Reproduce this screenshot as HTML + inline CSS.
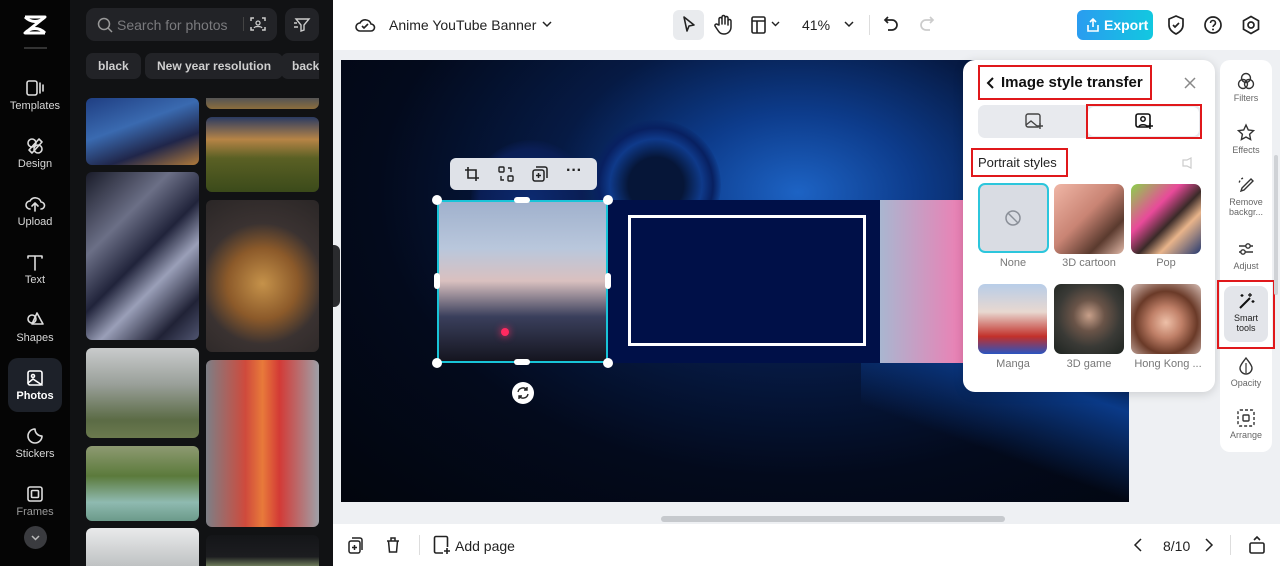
<!DOCTYPE html>
<html><head><meta charset="utf-8"><style>
*{box-sizing:border-box;margin:0;padding:0}
body{width:1280px;height:566px;overflow:hidden;font-family:"Liberation Sans",sans-serif;background:#eef0f3;position:relative}
.abs{position:absolute}
.nav{left:0;top:0;width:70px;height:566px;background:#050505}
.navi{position:absolute;left:8px;width:54px;height:54px;color:#d8d8d8;font-size:11px;text-align:center}
.navi svg{display:block;margin:6px auto 2px}
.panel{left:70px;top:0;width:263px;height:566px;background:#111214}
.ph{position:absolute;border-radius:6px}
.chip{position:absolute;top:53px;height:26px;background:#222327;border-radius:7px;color:#cfcfcf;font-size:12px;font-weight:bold;line-height:26px;padding:0 12px}
.top{left:333px;top:0;width:947px;height:50px;background:#fff}
.bot{left:333px;top:524px;width:947px;height:42px;background:#fff}
svg{overflow:visible}
.tb{fill:none;stroke:#222;stroke-width:1.6;stroke-linecap:round;stroke-linejoin:round}
.rt{position:absolute;left:1220px;top:60px;width:52px;height:392px;background:#fff;border-radius:10px}
.rti{position:absolute;left:0;width:52px;text-align:center;font-size:9px;color:#666}
.rti svg{display:block;margin:0 auto 3px}
.sp{left:963px;top:60px;width:252px;height:332px;background:#fff;border-radius:12px;box-shadow:0 2px 10px rgba(0,0,0,.15)}
.st{position:absolute;width:70px;height:70px;border-radius:7px}
.lbl{position:absolute;width:76px;text-align:center;font-size:11px;color:#777}
.red{position:absolute;border:2px solid #e0181b}
</style></head><body>

<div class="abs nav">
  <svg class="abs" style="left:22px;top:14px" width="26" height="22" viewBox="0 0 26 22"><path d="M3 3h20L3 19h20M3 3c6 6 14 6 20 0M3 19c6-6 14-6 20 0" fill="none" stroke="#fff" stroke-width="3" stroke-linejoin="round"/></svg>
  <div class="abs" style="left:24px;top:47px;width:23px;height:2px;background:#333"></div>
  <div class="navi" style="top:72px"><svg width="20" height="20" class="tb" style="stroke:#ddd"><rect x="2" y="3" width="10" height="14" rx="2"/><path d="M15 5v10M18 7v6"/></svg>Templates</div>
  <div class="navi" style="top:130px"><svg width="20" height="20" class="tb" style="stroke:#ddd"><circle cx="7" cy="7" r="4"/><circle cx="13" cy="13" r="4"/><path d="M14 3l3 3-10 11-3-3z"/></svg>Design</div>
  <div class="navi" style="top:188px"><svg width="20" height="20" class="tb" style="stroke:#ddd"><path d="M5 15a4 4 0 010-8 6 6 0 0111 1 3.5 3.5 0 010 7M10 17v-7M7 12l3-3 3 3"/></svg>Upload</div>
  <div class="navi" style="top:246px"><svg width="20" height="20" class="tb" style="stroke:#ddd"><path d="M3 4h14M10 4v14M3 4v2M17 4v2"/></svg>Text</div>
  <div class="navi" style="top:304px"><svg width="20" height="20" class="tb" style="stroke:#ddd"><circle cx="7" cy="9" r="4"/><path d="M12 3l6 11H7z"/></svg>Shapes</div>
  <div class="navi" style="top:358px;width:54px;height:54px;background:#1d2129;border-radius:10px;color:#fff;font-weight:bold;padding-top:4px"><svg width="20" height="20" class="tb" style="stroke:#fff"><rect x="3" y="3" width="14" height="14" rx="2"/><circle cx="8" cy="8" r="1.5"/><path d="M3 15l5-4 9 6"/></svg>Photos</div>
  <div class="navi" style="top:420px"><svg width="20" height="20" class="tb" style="stroke:#ddd"><path d="M10 3a7 7 0 107 7c-4 0-7-3-7-7z"/></svg>Stickers</div>
  <div class="navi" style="top:478px;color:#999"><svg width="20" height="20" class="tb" style="stroke:#ddd"><rect x="3" y="3" width="14" height="14" rx="2"/><rect x="6.5" y="6.5" width="7" height="7" rx="1"/></svg>Frames</div>
  <div class="abs" style="left:24px;top:526px;width:23px;height:23px;border-radius:50%;background:#3a3b3f"><svg width="23" height="23"><path d="M8 10l3.5 3.5L15 10" fill="none" stroke="#bbb" stroke-width="1.5"/></svg></div>
</div>

<div class="abs panel">
  <div class="abs" style="left:16px;top:8px;width:191px;height:33px;background:#222327;border-radius:9px"></div>
  <svg class="abs" style="left:27px;top:17px" width="16" height="16"><circle cx="7" cy="7" r="5.5" fill="none" stroke="#999" stroke-width="1.5"/><path d="M11 11l4 4" stroke="#999" stroke-width="1.5"/></svg>
  <div class="abs" style="left:47px;top:17px;color:#7b7b7e;font-size:14px">Search for photos</div>
  <div class="abs" style="left:173px;top:17px;width:1px;height:14px;background:#444"></div>
  <svg class="abs" style="left:180px;top:16px" width="16" height="16"><path d="M1 5V2h3M12 2h3v3M15 11v3h-3M4 14H1v-3" fill="none" stroke="#ccc" stroke-width="1.5"/><circle cx="8" cy="7" r="2" fill="none" stroke="#ccc" stroke-width="1.3"/><path d="M4 12c1-2 7-2 8 0" fill="none" stroke="#ccc" stroke-width="1.3"/></svg>
  <div class="abs" style="left:215px;top:8px;width:34px;height:33px;background:#222327;border-radius:9px"><svg width="34" height="33"><path d="M11 11h13l-5 6v5l-3 1v-6z M9 15h3M9 19h4" fill="none" stroke="#ccc" stroke-width="1.4"/></svg></div>
  <div class="chip" style="left:16px">black</div>
  <div class="chip" style="left:75px">New year resolution</div>
  <div class="chip" style="left:211px;width:38px;border-radius:7px 0 0 7px;overflow:hidden;padding:0 0 0 11px">back</div>
  <div class="ph" style="left:16px;top:98px;width:113px;height:67px;background:linear-gradient(160deg,#1f3e82,#3a6ab0 40%,#20264a 70%,#b07a3a)"></div>
  <div class="ph" style="left:136px;top:98px;width:113px;height:11px;background:linear-gradient(#555,#8b6d3c);border-radius:0 0 6px 6px"></div>
  <div class="ph" style="left:136px;top:117px;width:113px;height:75px;background:linear-gradient(#2b3b62 0,#b68446 30%,#5a6024 55%,#3b4a1a 100%)"></div>
  <div class="ph" style="left:16px;top:172px;width:113px;height:168px;background:linear-gradient(135deg,#1a1c2a,#6b6f86 30%,#20233a 50%,#9a9fb8 65%,#202236 85%,#505570)"></div>
  <div class="ph" style="left:136px;top:200px;width:113px;height:152px;background:radial-gradient(circle at 50% 55%,#c5924a 0,#8c5a2a 35%,#3a3231 60%,#2a2626 100%)"></div>
  <div class="ph" style="left:16px;top:348px;width:113px;height:90px;background:linear-gradient(#c9cbcc,#9aa09a 40%,#5b6b45 80%,#6b7a4e)"></div>
  <div class="ph" style="left:136px;top:360px;width:113px;height:167px;background:linear-gradient(90deg,#7d7f86,#cf4a3c 35%,#e87a3a 50%,#d33a36 65%,#9ea1a8)"></div>
  <div class="ph" style="left:16px;top:446px;width:113px;height:75px;background:linear-gradient(#8e9a72,#5b7a3b 40%,#8fbab0 75%,#6b9a8a)"></div>
  <div class="ph" style="left:16px;top:528px;width:113px;height:38px;background:linear-gradient(#e9eaeb,#bfc2c3);border-radius:6px 6px 0 0"></div>
  <div class="ph" style="left:136px;top:535px;width:113px;height:31px;background:linear-gradient(#141518,#1c1d20 70%,#6d7a5a);border-radius:6px 6px 0 0"></div>
</div>
<div class="abs" style="left:333px;top:245px;width:7px;height:62px;background:#2a2b2e;border-radius:0 6px 6px 0"></div>

<div class="abs top">
  <svg class="abs" style="left:22px;top:16px" width="20" height="18"><path d="M5 15a4 4 0 010-8 6 6 0 0111 1 3.5 3.5 0 010 7z M7 10l2 2 4-4" fill="none" stroke="#222" stroke-width="1.6"/></svg>
  <div class="abs" style="left:56px;top:17px;font-size:14px;color:#222">Anime YouTube Banner</div>
  <svg class="abs" style="left:208px;top:20px" width="12" height="10"><path d="M2 2l4 4 4-4" fill="none" stroke="#222" stroke-width="1.5"/></svg>
  <div class="abs" style="left:340px;top:10px;width:31px;height:30px;background:#e9ebee;border-radius:6px"><svg width="31" height="30"><path d="M11 7l10 8-5 1 -2 5z" fill="none" stroke="#222" stroke-width="1.6" stroke-linejoin="round"/></svg></div>
  <svg class="abs" style="left:380px;top:13px" width="20" height="22"><path d="M6 12V6a1.5 1.5 0 013 0v5V4a1.5 1.5 0 013 0v7V5a1.5 1.5 0 013 0v7-4a1.5 1.5 0 013 0v6c0 4-3 7-7 7s-5-2-7-5l-2-3a1.5 1.5 0 012.5-1.5z" fill="none" stroke="#222" stroke-width="1.5" stroke-linejoin="round"/></svg>
  <svg class="abs" style="left:418px;top:16px" width="16" height="18"><rect x="1" y="1" width="13" height="16" rx="1.5" fill="none" stroke="#222" stroke-width="1.6"/><path d="M1 5h13M6 5v12" stroke="#222" stroke-width="1.6"/></svg>
  <svg class="abs" style="left:438px;top:21px" width="10" height="8"><path d="M1 1l3.5 3.5L8 1" fill="none" stroke="#222" stroke-width="1.4"/></svg>
  <div class="abs" style="left:469px;top:17px;font-size:14px;color:#222">41%</div>
  <svg class="abs" style="left:510px;top:20px" width="12" height="10"><path d="M2 2l4 4 4-4" fill="none" stroke="#222" stroke-width="1.5"/></svg>
  <div class="abs" style="left:536px;top:15px;width:1px;height:20px;background:#ddd"></div>
  <svg class="abs" style="left:550px;top:15px" width="18" height="20"><path d="M5 2L2 5l3 3M2 5h7a5 5 0 010 10H5" fill="none" stroke="#222" stroke-width="1.7"/></svg>
  <svg class="abs" style="left:584px;top:15px" width="18" height="20"><path d="M13 2l3 3-3 3M16 5H9a5 5 0 000 10h4" fill="none" stroke="#ccc" stroke-width="1.7"/></svg>
  <div class="abs" style="left:744px;top:10px;width:76px;height:30px;border-radius:6px;background:linear-gradient(90deg,#2a9cf0,#12c8e0);color:#fff;font-weight:bold;font-size:14px;line-height:30px;padding-left:27px">Export<svg class="abs" style="left:9px;top:8px" width="14" height="14"><path d="M7 9V1M4 4l3-3 3 3M2 7v6h10V7" fill="none" stroke="#fff" stroke-width="1.6"/></svg></div>
  <svg class="abs" style="left:833px;top:14px" width="20" height="22"><path d="M10 2l7 3v6c0 4-3 7-7 9-4-2-7-5-7-9V5z M7 11l2 2 4-4" fill="none" stroke="#222" stroke-width="1.7"/></svg>
  <svg class="abs" style="left:870px;top:15px" width="20" height="20"><circle cx="10" cy="10" r="8" fill="none" stroke="#222" stroke-width="1.7"/><path d="M7.5 8a2.5 2.5 0 115 0c0 2-2.5 2-2.5 4" fill="none" stroke="#222" stroke-width="1.6"/><circle cx="10" cy="14.5" r="1" fill="#222"/></svg>
  <svg class="abs" style="left:908px;top:15px" width="20" height="20"><path d="M10 1.5l7.5 4.2v8.6L10 18.5 2.5 14.3V5.7z" fill="none" stroke="#222" stroke-width="1.7"/><circle cx="10" cy="10" r="3" fill="none" stroke="#222" stroke-width="1.7"/></svg>
</div>

<!-- canvas -->
<div class="abs" style="left:341px;top:60px;width:788px;height:442px;overflow:hidden;background:radial-gradient(ellipse at 58% 30%,#1d63c4 0,#0d3c8c 18%,#061a44 38%,#030a1c 65%,#02050d 100%)">
  <div class="abs" style="left:130px;top:80px;width:120px;height:120px;border-radius:50%;background:radial-gradient(#0c2a70,#0a1e55 60%,transparent 72%)"></div>
  <div class="abs" style="left:250px;top:60px;width:130px;height:130px;border-radius:50%;background:radial-gradient(#061638 30%,#0f3a8a 50%,#082060 62%,transparent 72%)"></div>
  <div class="abs" style="left:520px;top:200px;width:400px;height:300px;background:linear-gradient(200deg,transparent 30%,#0a3a88 45%,transparent 65%)"></div>
  <div class="abs" style="left:96px;top:140px;width:693px;height:163px;background:#001048"></div>
  <div class="abs" style="left:287px;top:155px;width:238px;height:131px;border:3px solid #fff"></div>
  <div class="abs" style="left:539px;top:140px;width:250px;height:163px;background:linear-gradient(90deg,#a9b6d0,#e784b6 30%,#f06aa6 45%,#c9b6d0 60%,#2a5aa8 80%)"></div>
  <div class="abs" style="left:97px;top:140px;width:170px;height:162px;background:linear-gradient(#9fb0cc 0,#b9c7dc 30%,#d9c0bf 50%,#3a3f5c 72%,#14141e 100%)"></div>
  <div class="abs" style="left:160px;top:268px;width:8px;height:8px;border-radius:50%;background:#ff2a60;box-shadow:0 0 8px #ff2a60"></div>
</div>
<!-- selection -->
<div class="abs" style="left:437px;top:200px;width:171px;height:163px;border:2px solid #18c4d8"></div>
<div class="abs" style="left:432px;top:195px;width:10px;height:10px;border-radius:50%;background:#fff"></div>
<div class="abs" style="left:603px;top:195px;width:10px;height:10px;border-radius:50%;background:#fff"></div>
<div class="abs" style="left:432px;top:358px;width:10px;height:10px;border-radius:50%;background:#fff"></div>
<div class="abs" style="left:603px;top:358px;width:10px;height:10px;border-radius:50%;background:#fff"></div>
<div class="abs" style="left:514px;top:197px;width:16px;height:6px;border-radius:3px;background:#fff"></div>
<div class="abs" style="left:514px;top:359px;width:16px;height:6px;border-radius:3px;background:#fff"></div>
<div class="abs" style="left:434px;top:273px;width:6px;height:16px;border-radius:3px;background:#fff"></div>
<div class="abs" style="left:605px;top:273px;width:6px;height:16px;border-radius:3px;background:#fff"></div>
<div class="abs" style="left:512px;top:382px;width:22px;height:22px;border-radius:50%;background:#fff"><svg width="22" height="22"><path d="M6 10a5 5 0 019-2M16 12a5 5 0 01-9 2M15 5v3h-3M7 17v-3h3" fill="none" stroke="#222" stroke-width="1.4"/></svg></div>
<div class="abs" style="left:450px;top:158px;width:147px;height:32px;border-radius:6px;background:#dfe2e8">
  <svg class="abs" style="left:14px;top:8px" width="16" height="16"><path d="M4 1v11h11M1 4h11v11" fill="none" stroke="#222" stroke-width="1.6"/></svg>
  <svg class="abs" style="left:48px;top:8px" width="16" height="16"><rect x="1" y="1" width="5" height="5" rx="1" fill="none" stroke="#222" stroke-width="1.4"/><rect x="10" y="10" width="5" height="5" rx="1" fill="none" stroke="#222" stroke-width="1.4"/><path d="M10 2h3v4M6 14H3v-4" fill="none" stroke="#222" stroke-width="1.4"/></svg>
  <svg class="abs" style="left:82px;top:8px" width="16" height="16"><rect x="1" y="4" width="11" height="11" rx="2" fill="none" stroke="#222" stroke-width="1.5"/><path d="M4 1h9a2 2 0 012 2v9M6.5 7v5M4 9.5h5" fill="none" stroke="#222" stroke-width="1.5"/></svg>
  <div class="abs" style="left:116px;top:4px;font-size:16px;font-weight:bold;color:#222">···</div>
</div>

<!-- style panel -->
<div class="abs sp">
  <svg class="abs" style="left:22px;top:16px" width="10" height="14"><path d="M8 2L3 7l5 5" fill="none" stroke="#111" stroke-width="2"/></svg>
  <div class="abs" style="left:38px;top:14px;font-size:15px;font-weight:bold;color:#111">Image style transfer</div>
  <svg class="abs" style="left:220px;top:16px" width="14" height="14"><path d="M2 2l10 10M12 2L2 12" stroke="#888" stroke-width="1.5"/></svg>
  <div class="abs" style="left:15px;top:45px;width:223px;height:33px;background:#e8eaee;border-radius:7px"></div>
  <div class="abs" style="left:125px;top:47px;width:111px;height:29px;background:#fff;border-radius:6px"></div>
  <svg class="abs" style="left:62px;top:53px" width="18" height="17"><rect x="1" y="1" width="14" height="13" rx="2" fill="none" stroke="#444" stroke-width="1.4"/><path d="M1 12l5-4 6 5" fill="none" stroke="#444" stroke-width="1.4"/><path d="M15 10v6M12 13h6" stroke="#444" stroke-width="1.4"/></svg>
  <svg class="abs" style="left:172px;top:53px" width="18" height="17"><rect x="1" y="1" width="14" height="13" rx="2" fill="none" stroke="#111" stroke-width="1.6"/><circle cx="8" cy="6" r="2.2" fill="none" stroke="#111" stroke-width="1.5"/><path d="M4 14c0-3 8-3 8 0" fill="none" stroke="#111" stroke-width="1.5"/><path d="M15 10v6M12 13h6" stroke="#111" stroke-width="1.5"/></svg>
  <div class="abs" style="left:15px;top:95px;font-size:13px;color:#222">Portrait styles</div>
  <svg class="abs" style="left:218px;top:97px" width="12" height="12"><path d="M2 3h4l4-2v10l-4-2H2z" fill="none" stroke="#ccc" stroke-width="1.2"/></svg>
  <div class="st" style="left:15px;top:123px;width:71px;height:70px;background:#d9dce3;border:2px solid #2cc6dc"><svg width="67" height="66"><circle cx="33" cy="33" r="7" fill="none" stroke="#8a8f98" stroke-width="1.5"/><path d="M28 28l10 10" stroke="#8a8f98" stroke-width="1.5"/></svg></div>
  <div class="st" style="left:91px;top:124px;background:linear-gradient(135deg,#f0b6a6,#c98474 45%,#5a3a2e 75%,#e2b9a8)"></div>
  <div class="st" style="left:168px;top:124px;background:linear-gradient(135deg,#8ad24a,#e94a9a 35%,#3a2a28 55%,#e8b48a 70%,#263a70)"></div>
  <div class="lbl" style="left:12px;top:197px">None</div>
  <div class="lbl" style="left:88px;top:197px">3D cartoon</div>
  <div class="lbl" style="left:165px;top:197px">Pop</div>
  <div class="st" style="left:15px;top:224px;width:69px;background:linear-gradient(#b8cde8,#e8d8d0 40%,#c2302a 75%,#2a54c0)"></div>
  <div class="st" style="left:91px;top:224px;background:radial-gradient(circle at 50% 45%,#c8a08a 0,#6a5448 30%,#3a3a36 60%,#1e2420)"></div>
  <div class="st" style="left:168px;top:224px;background:radial-gradient(circle at 50% 55%,#eec0a8 0,#c08068 30%,#6a3a28 60%,#d8c0b8)"></div>
  <div class="lbl" style="left:12px;top:298px">Manga</div>
  <div class="lbl" style="left:88px;top:298px">3D game</div>
  <div class="lbl" style="left:165px;top:298px;width:80px">Hong Kong ...</div>
</div>
<div class="red" style="left:978px;top:65px;width:174px;height:35px"></div>
<div class="red" style="left:1086px;top:104px;width:116px;height:35px"></div>
<div class="red" style="left:971px;top:148px;width:97px;height:29px"></div>

<!-- right toolbar -->
<div class="rt">
  <div class="rti" style="top:12px"><svg width="18" height="18"><circle cx="9" cy="6" r="4.5" fill="none" stroke="#333" stroke-width="1.4"/><circle cx="6" cy="12" r="4.5" fill="none" stroke="#333" stroke-width="1.4"/><circle cx="12" cy="12" r="4.5" fill="none" stroke="#333" stroke-width="1.4"/></svg>Filters</div>
  <div class="rti" style="top:64px"><svg width="18" height="18"><path d="M9 1l2.3 5 5.2.6-3.9 3.6 1 5.3L9 13l-4.6 2.5 1-5.3L1.5 6.6 6.7 6z" fill="none" stroke="#333" stroke-width="1.4"/></svg>Effects</div>
  <div class="rti" style="top:116px;line-height:10px"><svg width="18" height="18"><path d="M6 2a7 7 0 00-4 6" fill="none" stroke="#333" stroke-width="1.4" stroke-dasharray="2 2"/><path d="M14 3l2 2-9 9-3 1 1-3z" fill="none" stroke="#333" stroke-width="1.4"/></svg>Remove<br>backgr...</div>
  <div class="rti" style="top:180px"><svg width="18" height="18"><path d="M2 6h14M2 12h14" stroke="#333" stroke-width="1.4"/><circle cx="11" cy="6" r="2.2" fill="#fff" stroke="#333" stroke-width="1.4"/><circle cx="6" cy="12" r="2.2" fill="#fff" stroke="#333" stroke-width="1.4"/></svg>Adjust</div>
  <div class="abs" style="left:4px;top:226px;width:44px;height:56px;background:#e3e5ea;border-radius:8px"></div>
  <div class="rti" style="top:232px;color:#222;line-height:10px"><svg width="18" height="18"><path d="M3 16L13 6" stroke="#111" stroke-width="2"/><path d="M13 1v4M11 3h4M16 8v3M14.5 9.5h3M5 2v3M3.5 3.5h3" stroke="#111" stroke-width="1.2"/></svg>Smart<br>tools</div>
  <div class="rti" style="top:297px"><svg width="18" height="18"><path d="M9 1c3 4 6 7 6 10a6 6 0 01-12 0c0-3 3-6 6-10z" fill="none" stroke="#333" stroke-width="1.4"/><path d="M9 6v10" stroke="#333" stroke-width="1.2"/></svg>Opacity</div>
  <div class="rti" style="top:349px"><svg width="18" height="18"><rect x="1" y="1" width="16" height="16" rx="2" fill="none" stroke="#333" stroke-width="1.4" stroke-dasharray="3 2"/><rect x="6" y="6" width="6" height="6" rx="1" fill="none" stroke="#333" stroke-width="1.4"/></svg>Arrange</div>
</div>
<div class="red" style="left:1217px;top:280px;width:58px;height:69px"></div>
<div class="abs" style="left:1274px;top:155px;width:4px;height:140px;background:#cfd2d6;border-radius:2px"></div>

<div class="abs" style="left:661px;top:516px;width:344px;height:6px;background:#c6c9cd;border-radius:3px"></div>

<div class="abs bot">
  <svg class="abs" style="left:15px;top:13px" width="16" height="18"><rect x="1" y="4" width="11" height="12" rx="2" fill="none" stroke="#222" stroke-width="1.5"/><path d="M4 1h8a2 2 0 012 2v10M6.5 8v5M4 10.5h5" fill="none" stroke="#222" stroke-width="1.5"/></svg>
  <svg class="abs" style="left:52px;top:12px" width="16" height="18"><path d="M2 5h12M6 5V2h4v3M3.5 5l1 11h7l1-11" fill="none" stroke="#222" stroke-width="1.5"/></svg>
  <div class="abs" style="left:86px;top:11px;width:1px;height:20px;background:#ddd"></div>
  <svg class="abs" style="left:100px;top:11px" width="18" height="20"><path d="M10 18H3a1.5 1.5 0 01-1.5-1.5V3A1.5 1.5 0 013 1.5h10A1.5 1.5 0 0114.5 3v9" fill="none" stroke="#222" stroke-width="1.6"/><path d="M14 13v6M11 16h6" stroke="#222" stroke-width="1.6"/></svg>
  <div class="abs" style="left:122px;top:14px;font-size:14px;color:#222">Add page</div>
  <svg class="abs" style="left:800px;top:14px" width="10" height="14"><path d="M8 1L2 7l6 6" fill="none" stroke="#222" stroke-width="1.5"/></svg>
  <div class="abs" style="left:830px;top:14px;font-size:14px;color:#222">8/10</div>
  <svg class="abs" style="left:871px;top:14px" width="10" height="14"><path d="M2 1l6 6-6 6" fill="none" stroke="#222" stroke-width="1.5"/></svg>
  <div class="abs" style="left:897px;top:11px;width:1px;height:20px;background:#ddd"></div>
  <svg class="abs" style="left:915px;top:11px" width="18" height="20"><rect x="2" y="8" width="14" height="10" rx="1.5" fill="none" stroke="#222" stroke-width="1.6"/><path d="M6 5l3-3 3 3" fill="none" stroke="#222" stroke-width="1.6"/></svg>
</div>
</body></html>
